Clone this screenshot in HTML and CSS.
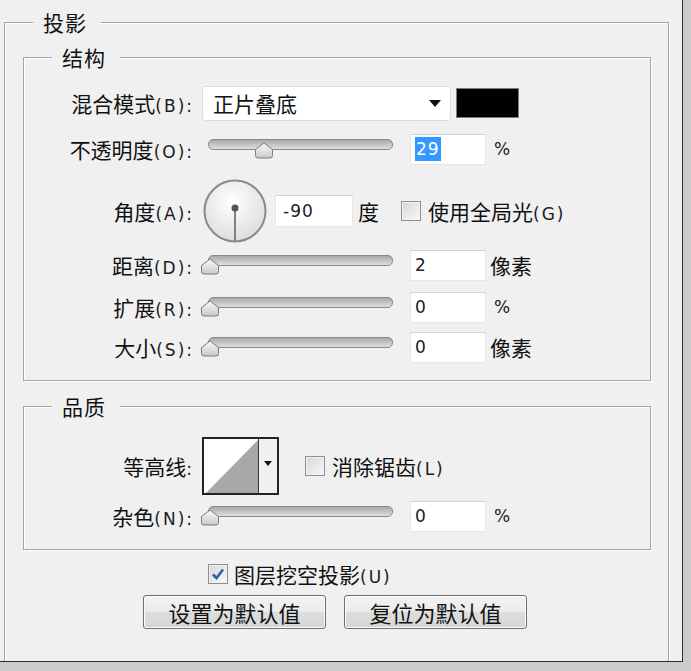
FILE: index.html
```html
<!DOCTYPE html>
<html>
<head>
  <title>投影</title>
  <link rel="stylesheet" href="styles.css">
</head>
<body>
  <svg class="defs" width="0" height="0">
    <defs>
      <linearGradient id="thumbFill" x1="0" y1="0" x2="0" y2="1">
        <stop offset="0" stop-color="#fafafa"/>
        <stop offset="1" stop-color="#c9c9c9"/>
      </linearGradient>
      <radialGradient id="dialFill" cx="45%" cy="35%" r="70%">
        <stop offset="0" stop-color="#ffffff"/>
        <stop offset="1" stop-color="#dadada"/>
      </radialGradient>
    </defs>
  </svg>

  <div class="window">
    <fieldset class="group outer">
      <legend>投影</legend>

      <fieldset class="group inner struct">
        <legend>结构</legend>

        <div class="row r-blend">
          <label class="lbl">混合模式<span class="en">(B):</span></label>
          <div class="select"><span>正片叠底</span><span class="caret"></span></div>
          <div class="swatch"></div>
        </div>

        <div class="row r-opacity">
          <label class="lbl">不透明度<span class="en">(O):</span></label>
          <div class="slider">
            <div class="track"></div>
            <svg class="thumb" style="left:29%" width="20" height="17" viewBox="0 0 20 17"><path d="M10 1 L18.5 7.5 V13.5 Q18.5 16 16 16 H4 Q1.5 16 1.5 13.5 V7.5 Z" fill="url(#thumbFill)" stroke="#7a7a7a"/></svg>
          </div>
          <div class="field"><span class="selected">29</span></div>
          <span class="pct en">%</span>
        </div>

        <div class="row r-angle">
          <label class="lbl">角度<span class="en">(A):</span></label>
          <svg class="dial" width="64" height="64" viewBox="0 0 64 64">
            <circle cx="32" cy="32" r="30.5" fill="url(#dialFill)" stroke="#8a8a8a" stroke-width="2"/>
            <line x1="32" y1="30" x2="32" y2="62" stroke="#808080" stroke-width="2"/>
            <circle cx="32" cy="29" r="3.5" fill="#555"/>
          </svg>
          <div class="field field-angle">-90</div>
          <span class="deg">度</span>
          <span class="check check-global"></span>
          <span class="check-text">使用全局光<span class="en">(G)</span></span>
        </div>

        <div class="row r-dist">
          <label class="lbl">距离<span class="en">(D):</span></label>
          <div class="slider">
            <div class="track"></div>
            <svg class="thumb" style="left:0%" width="20" height="17" viewBox="0 0 20 17"><path d="M10 1 L18.5 7.5 V13.5 Q18.5 16 16 16 H4 Q1.5 16 1.5 13.5 V7.5 Z" fill="url(#thumbFill)" stroke="#7a7a7a"/></svg>
          </div>
          <div class="field">2</div>
          <span class="unit">像素</span>
        </div>

        <div class="row r-spread">
          <label class="lbl">扩展<span class="en">(R):</span></label>
          <div class="slider">
            <div class="track"></div>
            <svg class="thumb" style="left:0%" width="20" height="17" viewBox="0 0 20 17"><path d="M10 1 L18.5 7.5 V13.5 Q18.5 16 16 16 H4 Q1.5 16 1.5 13.5 V7.5 Z" fill="url(#thumbFill)" stroke="#7a7a7a"/></svg>
          </div>
          <div class="field">0</div>
          <span class="pct en">%</span>
        </div>

        <div class="row r-size">
          <label class="lbl">大小<span class="en">(S):</span></label>
          <div class="slider">
            <div class="track"></div>
            <svg class="thumb" style="left:0%" width="20" height="17" viewBox="0 0 20 17"><path d="M10 1 L18.5 7.5 V13.5 Q18.5 16 16 16 H4 Q1.5 16 1.5 13.5 V7.5 Z" fill="url(#thumbFill)" stroke="#7a7a7a"/></svg>
          </div>
          <div class="field">0</div>
          <span class="unit">像素</span>
        </div>
      </fieldset>

      <fieldset class="group inner quality">
        <legend>品质</legend>

        <div class="row r-contour">
          <label class="lbl">等高线<span class="en">:</span></label>
          <svg class="contour" width="77" height="58" viewBox="0 0 77 58">
            <rect x="1" y="1" width="75" height="56" fill="#f0f0f0" stroke="#222" stroke-width="2"/>
            <rect x="2" y="2" width="54" height="54" fill="#fff"/>
            <polygon points="4,56 56,3 56,56" fill="#a8a8a8"/>
            <line x1="56.5" y1="1" x2="56.5" y2="57" stroke="#333" stroke-width="1"/>
            <polygon points="62,24 70,24 66,29" fill="#111"/>
          </svg>
          <span class="check check-aa"></span>
          <span class="check-text">消除锯齿<span class="en">(L)</span></span>
        </div>

        <div class="row r-noise">
          <label class="lbl">杂色<span class="en">(N):</span></label>
          <div class="slider">
            <div class="track"></div>
            <svg class="thumb" style="left:0%" width="20" height="17" viewBox="0 0 20 17"><path d="M10 1 L18.5 7.5 V13.5 Q18.5 16 16 16 H4 Q1.5 16 1.5 13.5 V7.5 Z" fill="url(#thumbFill)" stroke="#7a7a7a"/></svg>
          </div>
          <div class="field">0</div>
          <span class="pct en">%</span>
        </div>
      </fieldset>

      <div class="knockout">
        <span class="check checked">
          <svg width="18" height="18" viewBox="0 0 18 18"><path d="M4 9.5 L7.5 13 L14 4.5" fill="none" stroke="#2e5fae" stroke-width="2.6"/></svg>
        </span>
        <span class="check-text">图层挖空投影<span class="en">(U)</span></span>
      </div>

      <div class="buttons">
        <button class="btn">设置为默认值</button>
        <button class="btn">复位为默认值</button>
      </div>
    </fieldset>
  </div>
</body>
</html>
```

FILE: styles.css
```css
body {
  margin: 0;
  background: #cbcbcb;
  font-family: "Noto Sans CJK SC", "Noto Sans", sans-serif;
  font-size: 21px;
  color: #111;
}
.defs { position: absolute; }

.window {
  box-sizing: border-box;
  width: 683px;
  height: 662px;
  padding: 8px 0 0 4px;
  background: #f0f0f0;
  border-right: 1px solid #2e2e2e;
  border-bottom: 1px solid #2e2e2e;
  overflow: hidden;
}

.en {
  font-family: "DejaVu Sans", sans-serif;
  font-size: 17px;
  letter-spacing: 2px;
  color: #1c1c1c;
}

/* group boxes */
.group {
  margin: 0;
  padding: 0;
  min-width: 0;
  box-sizing: border-box;
  border: 1px solid #a4a4a4;
  box-shadow: inset 1px 1px 0 #fff, 1px 1px 0 #fff;
}
.group > legend {
  margin-left: 28px;
  padding: 0 14px 0 10px;
  line-height: 28px;
  font-size: 21px;
  letter-spacing: 1px;
  background: #f0f0f0;
}
.outer { width: 665px; height: 700px; }
.inner { width: 628px; margin-left: 18px; }
.struct { margin-top: 7px; padding: 14px 0 16px; }
.quality { margin-top: 11px; padding: 17px 0 16px; }

/* rows */
.row { display: flex; align-items: center; height: 36px; }
.lbl { flex: none; width: 170px; text-align: right; white-space: nowrap; }
.r-opacity { margin-top: 10px; }
.r-angle { margin-top: 12px; height: 64px; }
.r-dist { margin-top: 5px; height: 34px; }
.r-spread { margin-top: 8px; height: 34px; }
.r-size { margin-top: 6px; height: 34px; }
.r-contour { height: 57px; }
.r-noise { margin-top: 5px; height: 34px; }

/* blend select */
.select {
  box-sizing: border-box;
  width: 249px;
  height: 35px;
  margin-left: 8px;
  padding: 0 9px 0 10px;
  display: flex;
  align-items: center;
  justify-content: space-between;
  background: #fff;
  border: 1px solid #dcdcdc;
  border-radius: 3px;
  font-size: 21px;
}
.caret {
  width: 0;
  height: 0;
  border-left: 6px solid transparent;
  border-right: 6px solid transparent;
  border-top: 7px solid #111;
}
.swatch {
  box-sizing: border-box;
  width: 63px;
  height: 30px;
  margin-left: 5px;
  background: #000;
  border: 1px solid #7c7c7c;
}

/* sliders */
.slider { position: relative; flex: none; width: 185px; height: 20px; margin-left: 14px; }
.track {
  position: absolute;
  top: 0;
  left: 0;
  right: 0;
  height: 9px;
  border: 1px solid #8a8a8a;
  border-radius: 5px;
  background: linear-gradient(#a9a9a9, #dedede);
}
.thumb { position: absolute; top: 3px; transform: translateX(-8px); }

/* text fields */
.field {
  box-sizing: border-box;
  width: 76px;
  height: 31px;
  margin-left: 17px;
  padding-left: 4px;
  display: flex;
  align-items: center;
  background: #fff;
  border: 1px solid #e6e6e6;
  border-top-color: #d2d2d2;
  font-family: "DejaVu Sans", sans-serif;
  font-size: 17px;
  letter-spacing: 1px;
  color: #222;
}
.selected { background: #3399ff; color: #fff; padding: 2px 1px; }
.pct { margin-left: 8px; }
.unit { margin-left: 4px; }

/* angle */
.dial { flex: none; margin-left: 9px; }
.field-angle { width: 78px; height: 32px; margin-left: 8px; padding-left: 7px; }
.deg { margin-left: 5px; }

/* checkboxes */
.check {
  flex: none;
  box-sizing: border-box;
  width: 20px;
  height: 20px;
  display: inline-flex;
  align-items: center;
  justify-content: center;
  border: 1px solid #8e8e8e;
  background: linear-gradient(135deg, #d6d6d6, #f9f9f9);
  box-shadow: inset 0 0 0 1px #f2f2f2;
}
.check-global { margin-left: 22px; }
.check-aa { margin-left: 26px; }
.check-text { margin-left: 7px; white-space: nowrap; }

/* contour */
.contour { flex: none; margin-left: 8px; }

/* bottom */
.knockout { display: flex; align-items: center; height: 22px; margin: 13px 0 0 203px; }
.knockout .check-text { margin-left: 6px; }
.buttons { display: flex; gap: 18px; margin: 10px 0 0 138px; }
.btn {
  box-sizing: border-box;
  width: 183px;
  height: 34px;
  padding: 0;
  border: 1px solid #707070;
  border-radius: 3px;
  background: linear-gradient(#f3f3f3, #ebebeb 50%, #dddddd 50%, #d6d6d6);
  box-shadow: inset 0 0 0 1px #fbfbfb;
  font-family: "Noto Sans CJK SC", sans-serif;
  font-size: 22px;
  color: #111;
}
```
